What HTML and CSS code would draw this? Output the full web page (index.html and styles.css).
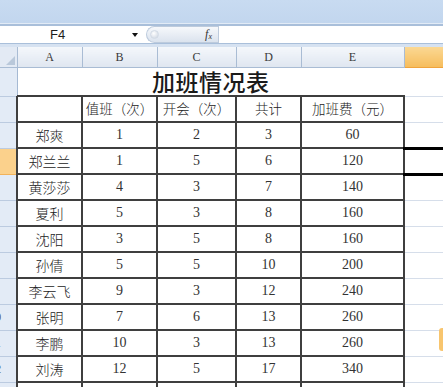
FILE: index.html
```html
<!DOCTYPE html>
<html lang="zh">
<head>
<meta charset="utf-8">
<title>加班情况表</title>
<link rel="stylesheet" href="styles.css">
</head>
<body>
<div class="app">
  <div class="ribbon"></div>
  <div class="ribbon-edge"></div>
  <div class="formula-bar">
    <div class="name-box"><span class="cell-ref">F4</span><span class="dd"></span></div>
    <div class="fx-box"><span class="knob"></span><span class="fx">f<sub>x</sub></span></div>
    <div class="formula-input"></div>
  </div>
  <div class="gap"></div>
  <table class="sheet">
    <colgroup>
      <col class="c-rh"><col class="c-a"><col class="c-b"><col class="c-c"><col class="c-d"><col class="c-e"><col class="c-f">
    </colgroup>
    <tr class="colhead">
      <th class="corner"><span class="tri"></span></th>
      <th>A</th><th>B</th><th>C</th><th>D</th><th>E</th><th class="sel-col"></th>
    </tr>
    <tr class="title-row">
      <td class="rh"></td>
      <td class="title" colspan="5">加班情况表</td>
      <td class="grid"></td>
    </tr>
    <tr class="row">
      <td class="rh"></td>
      <td class="t"></td><td class="t hd">值班（次）</td><td class="t hd">开会（次）</td><td class="t hd">共计</td><td class="t hd">加班费（元）</td>
      <td class="grid"></td>
    </tr>
    <tr class="row">
      <td class="rh"></td>
      <td class="t nm">郑爽</td><td class="t n">1</td><td class="t n">2</td><td class="t n">3</td><td class="t n">60</td><td class="grid"></td>
    </tr>
    <tr class="row">
      <td class="rh sel-row"></td>
      <td class="t nm">郑兰兰</td><td class="t n">1</td><td class="t n">5</td><td class="t n">6</td><td class="t n">120</td><td class="grid active"></td>
    </tr>
    <tr class="row">
      <td class="rh"></td>
      <td class="t nm">黄莎莎</td><td class="t n">4</td><td class="t n">3</td><td class="t n">7</td><td class="t n">140</td><td class="grid"></td>
    </tr>
    <tr class="row">
      <td class="rh"></td>
      <td class="t nm">夏利</td><td class="t n">5</td><td class="t n">3</td><td class="t n">8</td><td class="t n">160</td><td class="grid"></td>
    </tr>
    <tr class="row">
      <td class="rh"></td>
      <td class="t nm">沈阳</td><td class="t n">3</td><td class="t n">5</td><td class="t n">8</td><td class="t n">160</td><td class="grid"></td>
    </tr>
    <tr class="row">
      <td class="rh"></td>
      <td class="t nm">孙倩</td><td class="t n">5</td><td class="t n">5</td><td class="t n">10</td><td class="t n">200</td><td class="grid"></td>
    </tr>
    <tr class="row">
      <td class="rh"></td>
      <td class="t nm">李云飞</td><td class="t n">9</td><td class="t n">3</td><td class="t n">12</td><td class="t n">240</td><td class="grid"></td>
    </tr>
    <tr class="row">
      <td class="rh"><span class="rn">10</span></td>
      <td class="t nm">张明</td><td class="t n">7</td><td class="t n">6</td><td class="t n">13</td><td class="t n">260</td><td class="grid"></td>
    </tr>
    <tr class="row">
      <td class="rh"><span class="rn">11</span></td>
      <td class="t nm">李鹏</td><td class="t n">10</td><td class="t n">3</td><td class="t n">13</td><td class="t n">260</td><td class="grid"></td>
    </tr>
    <tr class="row">
      <td class="rh"><span class="rn">12</span></td>
      <td class="t nm">刘涛</td><td class="t n">12</td><td class="t n">5</td><td class="t n">17</td><td class="t n">340</td><td class="grid"></td>
    </tr>
    <tr class="row">
      <td class="rh"></td>
      <td class="t"></td><td class="t"></td><td class="t"></td><td class="t"></td><td class="t"></td><td class="grid"></td>
    </tr>
  </table>
  <div class="scroll-tab"></div>
</div>
</body>
</html>
```

FILE: styles.css
```css
* { box-sizing: border-box; }

html, body {
  margin: 0;
  padding: 0;
  background: #ffffff;
}

body {
  width: 443px;
  height: 387px;
  overflow: hidden;
  font-family: "Noto Sans CJK SC", "Liberation Sans", sans-serif;
  color: #2b2b2b;
}

.app {
  position: relative;
  width: 443px;
  height: 387px;
  overflow: hidden;
}

.ribbon {
  height: 24px;
  background: linear-gradient(#c8dbf1, #c2d6ee);
  border-bottom: 1px solid #e2ebf6;
}

.ribbon-edge {
  height: 2px;
  background: #a9bfda;
}

.formula-bar {
  display: flex;
  height: 18px;
  background: #ffffff;
  border-bottom: 1px solid #a9bfda;
}

.name-box {
  width: 146px;
  display: flex;
  align-items: center;
}

.cell-ref {
  margin-left: 50px;
  font-family: "Liberation Sans", sans-serif;
  font-size: 13px;
  color: #1d1d1d;
}

.dd {
  margin-left: auto;
  margin-right: 8px;
  width: 0;
  height: 0;
  border-left: 3px solid transparent;
  border-right: 3px solid transparent;
  border-top: 4px solid #111;
}

.fx-box {
  width: 72px;
  display: flex;
  align-items: center;
  justify-content: space-between;
  padding: 0 6px 0 3px;
  border: 1px solid #bdcbdd;
  border-right: none;
  border-radius: 9px 0 0 9px;
  background: linear-gradient(#f6f8fb, #dbe3ee);
}

.knob {
  width: 9px;
  height: 9px;
  border-radius: 50%;
  background: radial-gradient(circle at 40% 35%, #ffffff, #c9d2de);
  border: 1px solid #d3dbe6;
}

.fx {
  font-family: "Liberation Serif", serif;
  font-style: italic;
  font-size: 12px;
  color: #333;
  line-height: 1;
}

.fx sub {
  font-size: 8px;
  vertical-align: -1px;
}

.formula-input {
  flex: 1;
  border-left: 1px solid #bdcbdd;
}

.gap {
  height: 3px;
  background: #d6e2f1;
}

/* sheet */
.sheet {
  border-collapse: collapse;
  table-layout: fixed;
  width: 443px;
}

.c-rh { width: 17px; }
.c-a { width: 65px; }
.c-b { width: 75px; }
.c-c { width: 79px; }
.c-d { width: 65px; }
.c-e { width: 103px; }
.c-f { width: 39px; }

.sheet td, .sheet th {
  padding: 0;
  overflow: hidden;
  white-space: nowrap;
  line-height: 1;
  vertical-align: middle;
}

.colhead th {
  height: 20px;
  font-family: "Liberation Serif", serif;
  font-weight: normal;
  font-size: 12px;
  color: #3a3a3a;
  background: linear-gradient(#f4f7fb, #dfe6f0);
  border-right: 1px solid #a9bcd4;
  border-bottom: 1px solid #a9bcd4;
  text-align: center;
}

.colhead .corner {
  position: relative;
  background: #e3eaf4;
}

.tri {
  position: absolute;
  right: 2px;
  bottom: 2px;
  width: 0;
  height: 0;
  border-left: 9px solid transparent;
  border-bottom: 9px solid #b9c8da;
}

.colhead .sel-col {
  background: linear-gradient(#fbd893, #f6bd5d);
  border-bottom: 1px solid #f0a33c;
  border-left: 1px solid #f0a33c;
}

.rh {
  background: #e3ebf6;
  border-right: 1px solid #a5b9d3;
  border-bottom: 1px solid #bccbe0;
  position: relative;
}

.rh.sel-row {
  background: #fbd18c;
  border-bottom-color: #f1b25a;
}

.rn {
  position: absolute;
  left: -28px;
  top: 0;
  bottom: 0;
  width: 46px;
  display: flex;
  align-items: center;
  justify-content: center;
  font-family: "Liberation Sans", sans-serif;
  font-size: 11px;
  color: #555;
}

.title-row td { height: 29px; }
.row td { height: 26px; }

.sheet .title {
  text-align: center;
  font-size: 23px;
  line-height: 27px;
  font-weight: 500;
  color: #1a1a1a;
  border-bottom: 2px solid #3d3d3d;
  letter-spacing: 0.5px;
  overflow: visible;
}

.grid {
  border-right: 1px solid #d6deea;
  border-bottom: 1px solid #d6deea;
}

.t {
  border: 2px solid #3f3f3f;
  text-align: center;
}

.hd {
  font-size: 13.5px;
  font-weight: 300;
  color: #222;
}

.nm {
  font-size: 14px;
  font-weight: 300;
  color: #222;
}

.n {
  font-family: "Liberation Serif", serif;
  font-size: 14px;
  color: #333;
}

.grid.active {
  border-top: 3px solid #000;
  border-bottom: 3px solid #000;
}

.scroll-tab {
  position: absolute;
  left: 439px;
  top: 328px;
  width: 8px;
  height: 23px;
  border-radius: 3px;
  background: #f8c56e;
}
```
